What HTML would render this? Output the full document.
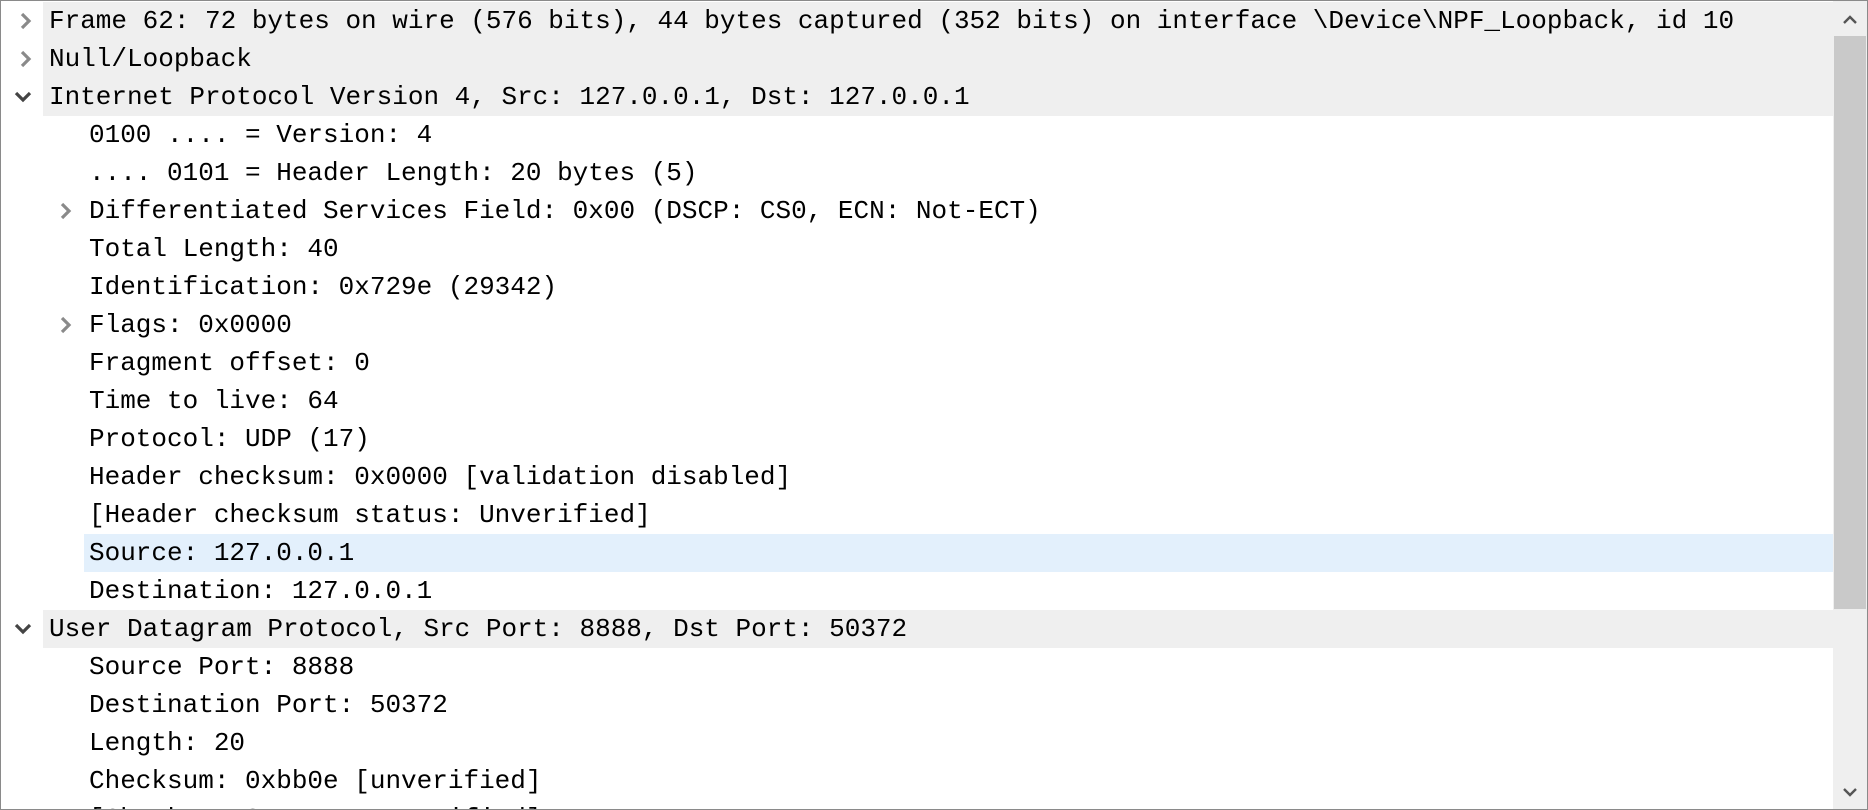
<!DOCTYPE html>
<html><head><meta charset="utf-8"><style>
html,body{margin:0;padding:0;background:#fff;}
body{width:1868px;height:810px;overflow:hidden;position:relative;font-family:"Liberation Mono","DejaVu Sans Mono",monospace;font-size:26px;color:#000;}
.frame{position:absolute;left:0;top:0;width:1866px;height:808px;border:1px solid #8a8a8a;overflow:hidden;}
.row{position:absolute;left:0;height:38px;line-height:38px;white-space:pre;width:1832px;}
.bg{position:absolute;top:0;bottom:0;right:0;}
.t{position:absolute;top:0;}
.ar{position:absolute;top:0;width:20px;height:38px;}
.sb{position:absolute;left:1832px;top:0;width:34px;height:808px;background:#efefef;}
.thumb{position:absolute;left:1px;top:35px;width:32px;height:573px;background:#c9c9c9;}
</style></head><body><div class="frame">
<div id="rows"></div>
<div class="sb"><div class="thumb"></div>
<svg style="position:absolute;left:9px;top:14px" width="16" height="10"><polyline points="2,8 8,2 14,8" fill="none" stroke="#555" stroke-width="2.4"/></svg>
<svg style="position:absolute;left:9px;top:786px" width="16" height="10"><polyline points="2,2 8,8 14,2" fill="none" stroke="#555" stroke-width="2.4"/></svg>
</div>
</div>
<script>
var R=[
[0,'c','Frame 62: 72 bytes on wire (576 bits), 44 bytes captured (352 bits) on interface \\Device\\NPF_Loopback, id 10',1],
[0,'c','Null/Loopback',1],
[0,'e','Internet Protocol Version 4, Src: 127.0.0.1, Dst: 127.0.0.1',1],
[1,'','0100 .... = Version: 4'],
[1,'','.... 0101 = Header Length: 20 bytes (5)'],
[1,'c','Differentiated Services Field: 0x00 (DSCP: CS0, ECN: Not-ECT)'],
[1,'','Total Length: 40'],
[1,'','Identification: 0x729e (29342)'],
[1,'c','Flags: 0x0000'],
[1,'','Fragment offset: 0'],
[1,'','Time to live: 64'],
[1,'','Protocol: UDP (17)'],
[1,'','Header checksum: 0x0000 [validation disabled]'],
[1,'','[Header checksum status: Unverified]'],
[1,'','Source: 127.0.0.1',2],
[1,'','Destination: 127.0.0.1'],
[0,'e','User Datagram Protocol, Src Port: 8888, Dst Port: 50372',1],
[1,'','Source Port: 8888'],
[1,'','Destination Port: 50372'],
[1,'','Length: 20'],
[1,'','Checksum: 0xbb0e [unverified]'],
[1,'','[Checksum Status: Unverified]']
];
var h='';
R.forEach(function(r,i){
 var top=1+i*38, tx=r[0]?88:48, ax=r[0]?57:17;
 h+='<div class="row" style="top:'+top+'px">';
 if(r[3]==1)h+='<div class="bg" style="left:42px;background:#efefef"></div>';
 if(r[3]==2)h+='<div class="bg" style="left:83px;background:#e3f0fc"></div>';
 if(r[1]=='c')h+='<svg class="ar" style="left:'+ax+'px" viewBox="0 0 20 38"><polyline points="4,12 11,19 4,26" fill="none" stroke="#8a8a8a" stroke-width="3.2"/></svg>';
 if(r[1]=='e')h+='<svg class="ar" style="left:'+(ax-4)+'px" viewBox="0 0 20 38"><polyline points="2,15 9,22 16,15" fill="none" stroke="#444" stroke-width="3.2"/></svg>';
 var s=r[2].replace(/&/g,'&amp;').replace(/</g,'&lt;');
 h+='<span class="t" style="left:'+tx+'px">'+s+'</span></div>';
});
document.getElementById('rows').innerHTML=h;
</script>
</body></html>
